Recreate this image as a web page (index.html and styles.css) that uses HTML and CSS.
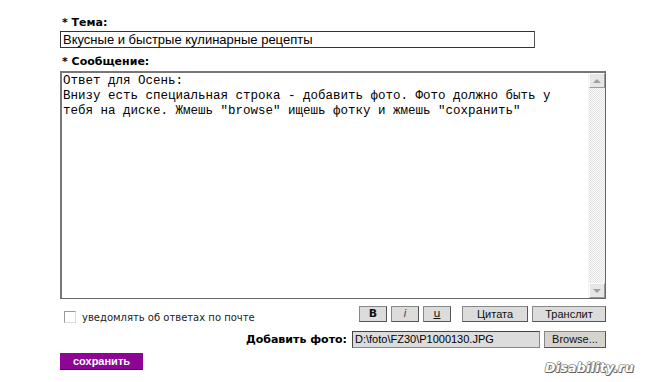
FILE: index.html
```html
<!DOCTYPE html>
<html lang="ru">
<head>
    <meta charset="UTF-8">
    <title>Сообщение</title>
    <link rel="stylesheet" href="styles.css">
</head>
<body>
    <div class="form">
        <div class="label">* Тема:</div>
        <div class="subject">Вкусные и быстрые кулинарные рецепты</div>

        <div class="label label-msg">* Сообщение:</div>
        <div class="message">
            <div class="msg-text">Ответ для Осень:
Внизу есть специальная строка - добавить фото. Фото должно быть у
тебя на диске. Жмешь "browse" ищешь фотку и жмешь "сохранить"</div>
            <div class="scrollbar">
                <div class="arrow"><span class="tri up"></span></div>
                <div class="track"></div>
                <div class="arrow"><span class="tri down"></span></div>
            </div>
        </div>

        <div class="tools">
            <div class="notify">
                <span class="check"></span>
                <span>уведомлять об ответах по почте</span>
            </div>
            <div class="buttons">
                <div class="btn btn-small"><b>B</b></div>
                <div class="btn btn-small"><i>i</i></div>
                <div class="btn btn-small"><u>u</u></div>
                <div class="btn btn-quote">Цитата</div>
                <div class="btn btn-translit">Транслит</div>
            </div>
        </div>

        <div class="photo">
            <span class="photo-label">Добавить фото:</span>
            <div class="file">D:\foto\FZ30\P1000130.JPG</div>
            <div class="btn btn-browse">Browse...</div>
        </div>

        <div class="save">сохранить</div>
    </div>
    <div class="watermark">Disability.ru</div>
</body>
</html>
```

FILE: styles.css
```css
body {
    margin: 0;
    background: #fff;
    font-family: "DejaVu Sans", Verdana, sans-serif;
    color: #000;
}
.form {
    width: 546px;
    padding: 16px 0 0 60px;
}
.label {
    font-family: "DejaVu Sans", sans-serif;
    font-weight: bold;
    font-size: 11px;
    line-height: 14px;
    padding-left: 2px;
    height: 15px;
}
.label-msg {
    margin-top: 7px;
    height: 15px;
}
.subject {
    width: 471px;
    height: 15px;
    border: 1px solid #333;
    border-right-color: #555;
    background: #fff;
    font-family: "Liberation Sans", Arial, sans-serif;
    font-size: 13px;
    line-height: 15px;
    padding-left: 2px;
}
.message {
    display: flex;
    height: 225px;
    border: 1px solid #666;
    border-top: 2px solid #777;
    border-left: 2px solid #777;
    margin-top: 1px;
    background: #fff;
}
.msg-text {
    flex: 1;
    white-space: pre;
    font-family: "Liberation Mono", "Courier New", monospace;
    font-size: 12.5px;
    line-height: 15px;
    padding: 1px 0 0 1px;
    overflow: hidden;
}
.scrollbar {
    width: 16px;
    display: flex;
    flex-direction: column;
    border-left: 1px solid #f4f4f4;
}
.arrow {
    height: 15px;
    background: #e6e6e6;
    border: 1px solid #fafafa;
    border-right-color: #9a9a9a;
    border-bottom-color: #9a9a9a;
    box-sizing: border-box;
    display: flex;
    align-items: center;
    justify-content: center;
}
.tri {
    width: 0;
    height: 0;
    border-left: 4px solid transparent;
    border-right: 4px solid transparent;
}
.tri.up {
    border-bottom: 4px solid #a0a0a0;
}
.tri.down {
    border-top: 4px solid #a0a0a0;
}
.track {
    flex: 1;
    background: repeating-conic-gradient(#e2e2e2 0 25%, #fbfbfb 0 50%) 0 0 / 2px 2px;
}
.tools {
    display: flex;
    justify-content: space-between;
    align-items: flex-start;
    margin-top: 7px;
    height: 17px;
}
.notify {
    display: flex;
    align-items: center;
    font-size: 10px;
    color: #222;
    padding-left: 4px;
    gap: 6px;
    margin-top: 5px;
}
.check {
    width: 10px;
    height: 10px;
    border: 1px solid #999;
    border-right-color: #ddd;
    border-bottom-color: #ddd;
    background: #fff;
}
.buttons {
    display: flex;
    gap: 4px;
}
.btn {
    height: 14px;
    background: #dcdcdc;
    border: 1px solid #555;
    border-top-color: #888;
    border-left-color: #888;
    font-family: "Liberation Sans", Arial, sans-serif;
    font-size: 11px;
    line-height: 14px;
    text-align: center;
    color: #111;
}
.btn-small {
    width: 26px;
    font-family: "DejaVu Sans", sans-serif;
}
.btn-small i {
    font-weight: normal;
    color: #444;
}
.btn-quote {
    width: 64px;
    margin-left: 7px;
}
.btn-translit {
    width: 72px;
}
.photo {
    display: flex;
    align-items: center;
    justify-content: flex-end;
    margin-top: 8px;
    height: 17px;
}
.photo-label {
    font-weight: bold;
    font-size: 11px;
    margin-right: 5px;
}
.file {
    width: 184px;
    height: 15px;
    border: 1px solid #444;
    border-right-color: #888;
    border-bottom-color: #888;
    background: #dcdcdc;
    font-family: "Liberation Sans", Arial, sans-serif;
    font-size: 11px;
    line-height: 15px;
    padding-left: 2px;
    margin-right: 4px;
}
.btn-browse {
    width: 60px;
    height: 15px;
    line-height: 15px;
    background: #d6d3ce;
}
.save {
    width: 83px;
    height: 16px;
    margin-top: 5px;
    background: #8e0494;
    border-bottom: 1px solid #5a0060;
    color: #fff;
    font-family: "Liberation Sans", Arial, sans-serif;
    font-weight: bold;
    font-size: 11px;
    line-height: 16px;
    text-align: center;
}
.watermark {
    position: absolute;
    left: 545px;
    top: 360px;
    font-family: "DejaVu Sans", sans-serif;
    font-style: italic;
    font-weight: bold;
    font-size: 12.5px;
    letter-spacing: 0.3px;
    color: #fff;
    text-shadow: 1px 0 #777, -1px 0 #999, 0 1px #666, 0 -1px #aaa, 1px 1px #555;
}
```
